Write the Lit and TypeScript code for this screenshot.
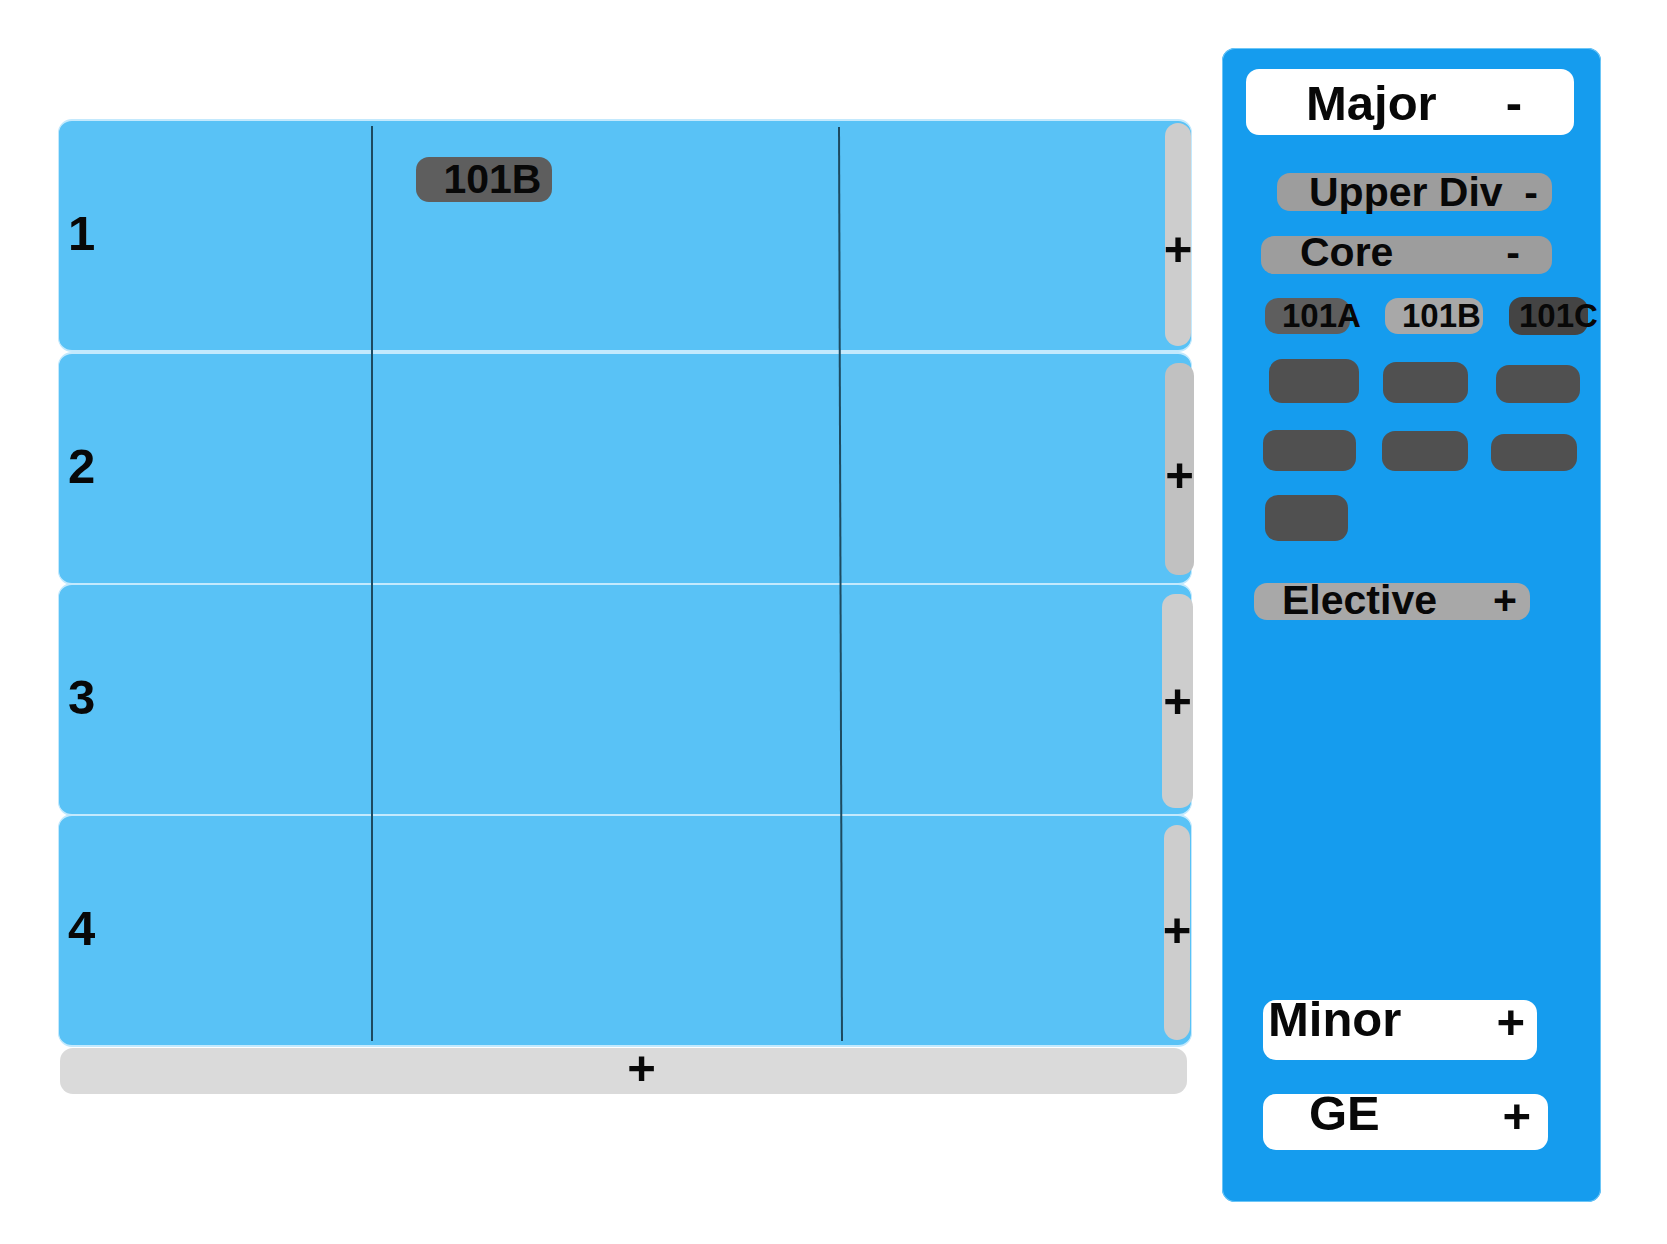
import { LitElement, html, css } from "lit";
import { customElement, property } from "lit/decorators.js";
import { styleMap } from "lit/directives/style-map.js";

interface Course {
  label?: string;
  tone: "mid" | "light" | "deep" | "blank";
  width: number;
  height: number;
  before: number;
  inset?: number;
}

const COURSE_ROWS: { align: string; courses: Course[] }[] = [
  {
    align: "first",
    courses: [
      { label: "101A", tone: "mid", width: 85, height: 36, before: 43, inset: 17 },
      { label: "101B", tone: "light", width: 98, height: 36, before: 35, inset: 17 },
      { label: "101C", tone: "deep", width: 79, height: 38, before: 26, inset: 10 },
    ],
  },
  {
    align: "second",
    courses: [
      { tone: "blank", width: 90, height: 44, before: 47 },
      { tone: "blank", width: 85, height: 41, before: 24 },
      { tone: "blank", width: 84, height: 38, before: 28 },
    ],
  },
  {
    align: "third",
    courses: [
      { tone: "blank", width: 93, height: 41, before: 41 },
      { tone: "blank", width: 86, height: 40, before: 26 },
      { tone: "blank", width: 86, height: 37, before: 23 },
    ],
  },
  {
    align: "fourth",
    courses: [{ tone: "blank", width: 83, height: 46, before: 43 }],
  },
];

const shared = css`
  * {
    box-sizing: border-box;
  }
  button {
    margin: 0;
    padding: 0;
    border: 0;
    font: inherit;
    color: inherit;
    white-space: nowrap;
    cursor: pointer;
  }
`;

/* Four-year grid: one row per year, each with its own add button. */
@customElement("plan-board")
class PlanBoard extends LitElement {
  static styles = [
    shared,
    css`
      :host {
        display: block;
        font-size: 49px;
        line-height: 56px;
      }
      .years {
        position: relative;
      }
      .year {
        display: grid;
        grid-template-columns: 314fr 468fr 352fr;
        min-height: 233px;
        border: 2px solid #c3e9fd;
        border-width: 2px 1px;
        border-radius: 14px;
        background: #59c2f6;
      }
      .year:nth-child(n + 3) {
        margin-top: -2px;
      }
      .number {
        align-self: center;
        padding: 0 0 6px 9px;
      }
      .term {
        padding: 36px 0 0 44px;
      }
      .course {
        display: block;
        width: 136px;
        height: 45px;
        padding-left: 27px;
        border-radius: 13px;
        background: #5e5e5e;
        font-size: 41px;
        line-height: 43px;
        text-align: left;
      }
      .last {
        display: flex;
        justify-content: flex-end;
      }
      .add {
        display: flex;
        align-items: center;
        justify-content: center;
        border-radius: 13px;
        background: #cdcdcd;
      }
      .add1 {
        width: 26px;
        margin: 2px 0 4px;
        padding-top: 28px;
      }
      .add2 {
        width: 29px;
        margin: 9px -3px 8px 0;
        padding-top: 12px;
        background: #c1c1c1;
      }
      .add3 {
        width: 31px;
        margin: 9px -2px 6px 0;
      }
      .add4 {
        width: 26px;
        margin: 9px 1px 5px 0;
        padding-bottom: 6px;
      }
      .dividers {
        position: absolute;
        left: 0;
        top: 7px;
        width: 100%;
        height: calc(100% - 13px);
        pointer-events: none;
      }
      .dividers line {
        stroke: #1d4a60;
        stroke-width: 2;
        vector-effect: non-scaling-stroke;
      }
      .more {
        display: block;
        width: calc(100% - 7px);
        height: 46px;
        margin: 1px 0 0 2px;
        padding-left: 36px;
        border-radius: 13px;
        background: #dadada;
        line-height: 40px;
      }
      .more span {
        display: block;
        height: 46px;
      }
    `,
  ];

  render() {
    return html`
      <div class="years">
        ${[1, 2, 3, 4].map(
          (n) => html`
            <section class="year" aria-label="Year ${n}">
              <span class="number">${n}</span>
              <div class="term">
                ${n === 1 ? html`<button class="course">101B</button>` : null}
              </div>
              <div class="last">
                <button class="add add${n}" aria-label="Add to year ${n}">+</button>
              </div>
            </section>
          `
        )}
        <svg class="dividers" viewBox="0 0 1134 915" preserveAspectRatio="none" aria-hidden="true">
          <line x1="314" y1="0" x2="314" y2="915"></line>
          <line x1="781" y1="1" x2="784" y2="915"></line>
        </svg>
      </div>
      <button class="more" aria-label="Add year"><span>+</span></button>
    `;
  }
}

/* Collapsible heading in the requirements panel. */
@customElement("group-toggle")
class GroupToggle extends LitElement {
  @property() label = "";
  @property({ type: Boolean }) open = false;
  @property({ reflect: true }) kind = "";

  static styles = [
    shared,
    css`
      :host {
        display: block;
      }
      .toggle {
        display: flex;
        justify-content: space-between;
        width: 100%;
        border-radius: 13px;
        background: #9d9d9d;
        font-size: 41px;
      }
      .major,
      .minor,
      .ge {
        background: #fff;
        font-size: 49px;
      }
      .major {
        height: 66px;
        padding: 0 52px 0 60px;
        line-height: 68px;
      }
      .upper {
        height: 38px;
        padding: 0 14px 0 32px;
        line-height: 38px;
      }
      .core {
        height: 38px;
        padding: 0 32px 0 39px;
        line-height: 32px;
      }
      .elective {
        height: 37px;
        padding: 0 13px 0 28px;
        background: #a8a8a8;
        line-height: 34px;
      }
      .minor {
        height: 60px;
        padding: 0 12px 0 5px;
        line-height: 38px;
      }
      .ge {
        height: 56px;
        padding: 0 17px 0 46px;
        line-height: 38px;
      }
      .minor .sign,
      .ge .sign {
        line-height: 44px;
      }
    `,
  ];

  render() {
    return html`
      <button class="toggle ${this.kind}" aria-expanded=${this.open ? "true" : "false"}>
        <span>${this.label}</span><span class="sign">${this.open ? "-" : "+"}</span>
      </button>
    `;
  }
}

@customElement("app-root")
class AppRoot extends LitElement {
  static styles = [
    shared,
    css`
      :host {
        display: block;
        color: #080808;
        font-family: "Liberation Sans", Arial, Helvetica, sans-serif;
        font-weight: 700;
      }
      .page {
        display: grid;
        grid-template-columns: minmax(0, 1134fr) minmax(0, 379fr);
        gap: 30px;
        min-height: 100vh;
        padding: 48px 66px 42px 58px;
        background: #fff;
      }
      .board {
        padding-top: 71px;
      }
      .panel {
        display: flex;
        flex-direction: column;
        padding: 21px 0 52px;
        border-radius: 13px;
        background: #159cee;
        box-shadow: inset 0 0 0 1px #6cc6f7;
      }
      .major {
        margin: 0 27px 0 24px;
      }
      .upper {
        margin: 38px 49px 0 55px;
      }
      .core {
        margin: 25px 49px 0 39px;
      }
      .elective {
        margin: 42px 71px 0 32px;
      }
      .minor {
        margin: auto 64px 0 41px;
      }
      .ge {
        margin: 34px 53px 0 41px;
      }
      .row {
        display: flex;
        align-items: flex-end;
      }
      .first {
        align-items: center;
        margin-top: 23px;
      }
      .second {
        margin-top: 24px;
      }
      .third {
        margin-top: 27px;
      }
      .fourth {
        margin-top: 24px;
      }
      .chip {
        display: flex;
        flex: none;
        align-items: center;
        border-radius: 13px;
        font-size: 33px;
        line-height: 36px;
      }
      .mid {
        background: #5e5e5e;
      }
      .light {
        background: #a8a8a8;
      }
      .deep {
        background: #444444;
      }
      .blank {
        background: #505050;
      }
    `,
  ];

  render() {
    return html`
      <main class="page">
        <plan-board class="board"></plan-board>
        <aside class="panel" aria-label="Requirements">
          <group-toggle class="major" kind="major" label="Major" open></group-toggle>
          <group-toggle class="upper" kind="upper" label="Upper Div" open></group-toggle>
          <group-toggle class="core" kind="core" label="Core" open></group-toggle>
          ${COURSE_ROWS.map(
            (row) => html`
              <div class="row ${row.align}">
                ${row.courses.map(
                  (c) => html`<button
                    class="chip ${c.tone}"
                    aria-label=${c.label ?? "Course"}
                    style=${styleMap({
                      width: `${c.width}px`,
                      height: `${c.height}px`,
                      marginLeft: `${c.before}px`,
                      paddingLeft: `${c.inset ?? 0}px`,
                    })}
                  >${c.label ?? ""}</button>`
                )}
              </div>
            `
          )}
          <group-toggle class="elective" kind="elective" label="Elective"></group-toggle>
          <group-toggle class="minor" kind="minor" label="Minor"></group-toggle>
          <group-toggle class="ge" kind="ge" label="GE"></group-toggle>
        </aside>
      </main>
    `;
  }
}
